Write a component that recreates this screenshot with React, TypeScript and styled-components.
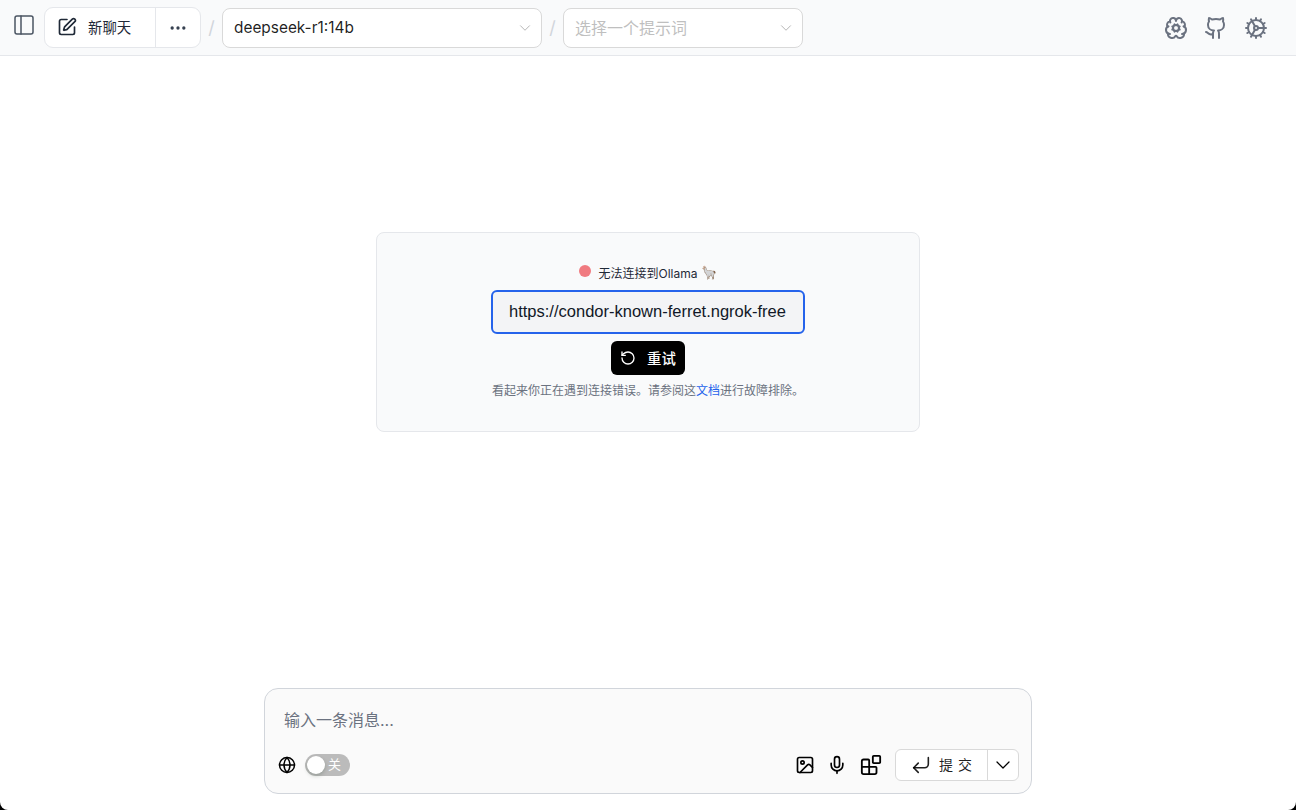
import React from "react";
import styled, { createGlobalStyle } from "styled-components";
import {
  PanelLeft,
  SquarePen,
  Ellipsis,
  ChevronDown,
  BrainCog,
  Github,
  Cog,
  RotateCcw,
  Globe,
  Image as ImageIcon,
  Mic,
  Blocks,
  CornerDownLeft,
} from "lucide-react";

const Global = createGlobalStyle`
  html, body, #root { margin: 0; padding: 0; height: 100%; }
  body {
    background: #000;
    color: #111827;
    font-family: Inter, "Noto Sans CJK SC", sans-serif;
    overflow: hidden;
  }
  * { box-sizing: border-box; }
`;

const Page = styled.div`
  width: 1296px;
  height: 810px;
  display: flex;
  flex-direction: column;
  background: #fff;
  border-radius: 0 0 8px 8px;
  overflow: hidden;
`;

const TopBar = styled.header`
  height: 56px;
  flex: none;
  display: flex;
  align-items: center;
  padding: 0 28px 0 12px;
  background: #f9fafb;
  border-bottom: 1px solid #e5e7eb;
`;

const IconSlot = styled.span`
  display: inline-flex;
  color: #4b5563;
  margin-top: -6px;
`;

const NewChatGroup = styled.div`
  display: flex;
  width: 157px;
  height: 41px;
  margin-left: 8px;
  background: #fff;
  border: 1px solid #e5e7eb;
  border-radius: 9px;
`;

const NewChat = styled.div`
  width: 111px;
  display: flex;
  align-items: center;
  padding: 0 0 2px 12px;
  gap: 11px;
  font-size: 14.4px;
  color: #1f2937;
  border-right: 1px solid #e5e7eb;
`;

const MoreCell = styled.div`
  flex: 1;
  display: flex;
  align-items: center;
  justify-content: center;
  color: #374151;
`;

const Slash = styled.span`
  width: 21px;
  text-align: center;
  font-size: 18px;
  color: #d1d5db;
`;

const Select = styled.div<{ $w: number }>`
  width: ${(p) => p.$w}px;
  height: 40px;
  display: flex;
  align-items: center;
  justify-content: space-between;
  padding: 0 7px 0 11px;
  background: #fff;
  border: 1px solid #d9d9d9;
  border-radius: 8px;
`;

const SelectText = styled.span<{ $muted?: boolean }>`
  font-size: ${(p) => (p.$muted ? 16 : 15.4)}px;
  margin-top: ${(p) => (p.$muted ? -2 : 0)}px;
  color: ${(p) => (p.$muted ? "#bfbfbf" : "rgba(0,0,0,.88)")};
`;

const Spacer = styled.div`
  flex: 1;
`;

const RightIcons = styled.div`
  display: flex;
  gap: 16px;
  color: #6b7280;
`;

const Main = styled.main`
  flex: 1;
  display: flex;
  flex-direction: column;
  align-items: center;
  padding-top: 176px;
`;

const Card = styled.section`
  width: 544px;
  height: 200px;
  display: flex;
  flex-direction: column;
  align-items: center;
  padding-top: 29px;
  background: #f9fafb;
  border: 1px solid #e5e7eb;
  border-radius: 8px;
`;

const Status = styled.div`
  height: 20px;
  display: flex;
  align-items: center;
  font-size: 12px;
  color: #1f2937;
`;

const Dot = styled.span`
  width: 12px;
  height: 12px;
  margin-right: 8px;
  margin-top: -3px;
  border-radius: 50%;
  background: #f07a80;
`;

const Llama = styled.span`
  margin-left: 4px;
  font-size: 13px;
  filter: brightness(0.85);
`;

const UrlInput = styled.div`
  width: 314px;
  height: 44px;
  margin-top: 8px;
  display: flex;
  align-items: center;
  padding: 0 0 2px 16px;
  font-family: "Liberation Sans", Arial, sans-serif;
  font-size: 16.5px;
  color: #111827;
  white-space: nowrap;
  overflow: hidden;
  background: #f3f4f6;
  border: 2px solid #2563eb;
  border-radius: 6px;
`;

const Retry = styled.button`
  width: 74px;
  height: 34px;
  margin-top: 7px;
  display: flex;
  align-items: center;
  gap: 11px;
  padding: 0 0 0 9px;
  font: inherit;
  font-size: 14.4px;
  font-weight: 500;
  color: #fff;
  background: #000;
  border: 0;
  border-radius: 6px;
`;

const RetryLabel = styled.span`
  margin-top: -2px;
`;

const Help = styled.p`
  margin: 7px 0 0;
  font-size: 12px;
  line-height: 18px;
  color: #6b7280;
`;

const DocLink = styled.a`
  color: #2563eb;
  text-decoration: none;
`;

const Composer = styled.section`
  width: 768px;
  height: 106px;
  margin: auto 0 16px;
  padding: 0 12px 0 13px;
  background: #fafafa;
  border: 1px solid #d1d5db;
  border-radius: 14px;
  display: flex;
  flex-direction: column;
`;

const Placeholder = styled.div`
  height: 60px;
  padding: 20px 0 0 6px;
  font-size: 16px;
  line-height: 22px;
  color: #6b7280;
`;

const ComposerBar = styled.div`
  display: flex;
  align-items: center;
  color: #000;
`;

const Toggle = styled.div`
  width: 45px;
  height: 22px;
  margin-left: 9px;
  padding: 2px;
  display: flex;
  align-items: center;
  gap: 3px;
  background: rgba(0, 0, 0, 0.25);
  border-radius: 11px;
  color: #fff;
  font-size: 13px;
`;

const ToggleLabel = styled.span`
  margin-top: -3px;
`;

const Knob = styled.span`
  width: 18px;
  height: 18px;
  border-radius: 50%;
  background: #fff;
  box-shadow: 0 2px 4px rgba(0, 35, 11, 0.2);
`;

const ToolIcons = styled.div`
  display: flex;
  align-items: center;
  gap: 12px;
  margin-right: 13px;
`;

const BlocksIcon = styled(Blocks)`
  margin-left: 1px;
`;

const SubmitGroup = styled.div`
  width: 124px;
  height: 32px;
  display: flex;
  background: #fff;
  border: 1px solid #d9d9d9;
  border-radius: 6px;
`;

const SubmitMain = styled.div`
  flex: 1;
  display: flex;
  align-items: center;
  padding-left: 14px;
  gap: 7px;
  font-size: 14px;
  letter-spacing: 5px;
  color: rgba(0, 0, 0, 0.88);
  border-right: 1px solid #d9d9d9;
`;

const SubmitLabel = styled.span`
  margin-top: -2px;
`;

const SubmitArrow = styled.div`
  width: 30px;
  display: flex;
  align-items: center;
  justify-content: center;
`;

export default function App() {
  return (
    <Page>
      <Global />
      <TopBar>
        <IconSlot>
          <PanelLeft size={24} strokeWidth={1.5} />
        </IconSlot>
        <NewChatGroup>
          <NewChat>
            <SquarePen size={20} strokeWidth={2} />
            新聊天
          </NewChat>
          <MoreCell>
            <Ellipsis size={20} />
          </MoreCell>
        </NewChatGroup>
        <Slash>/</Slash>
        <Select $w={320}>
          <SelectText>deepseek-r1:14b</SelectText>
          <ChevronDown size={18} color="#b0b0b0" strokeWidth={1.25} />
        </Select>
        <Slash>/</Slash>
        <Select $w={240}>
          <SelectText $muted>选择一个提示词</SelectText>
          <ChevronDown size={18} color="#b0b0b0" strokeWidth={1.25} />
        </Select>
        <Spacer />
        <RightIcons>
          <BrainCog size={24} strokeWidth={2} />
          <Github size={24} strokeWidth={2} />
          <Cog size={24} strokeWidth={2} />
        </RightIcons>
      </TopBar>
      <Main>
        <Card>
          <Status>
            <Dot />
            无法连接到Ollama<Llama>🦙</Llama>
          </Status>
          <UrlInput>https://condor-known-ferret.ngrok-free</UrlInput>
          <Retry>
            <RotateCcw size={16} />
            <RetryLabel>重试</RetryLabel>
          </Retry>
          <Help>
            看起来你正在遇到连接错误。请参阅这<DocLink>文档</DocLink>进行故障排除。
          </Help>
        </Card>
        <Composer>
          <Placeholder>输入一条消息...</Placeholder>
          <ComposerBar>
            <Globe size={18} />
            <Toggle>
              <Knob />
              <ToggleLabel>关</ToggleLabel>
            </Toggle>
            <Spacer />
            <ToolIcons>
              <ImageIcon size={20} />
              <Mic size={20} />
              <BlocksIcon size={22} />
            </ToolIcons>
            <SubmitGroup>
              <SubmitMain>
                <CornerDownLeft size={22} strokeWidth={1.75} />
                <SubmitLabel>提交</SubmitLabel>
              </SubmitMain>
              <SubmitArrow>
                <ChevronDown size={24} strokeWidth={1.25} />
              </SubmitArrow>
            </SubmitGroup>
          </ComposerBar>
        </Composer>
      </Main>
    </Page>
  );
}
